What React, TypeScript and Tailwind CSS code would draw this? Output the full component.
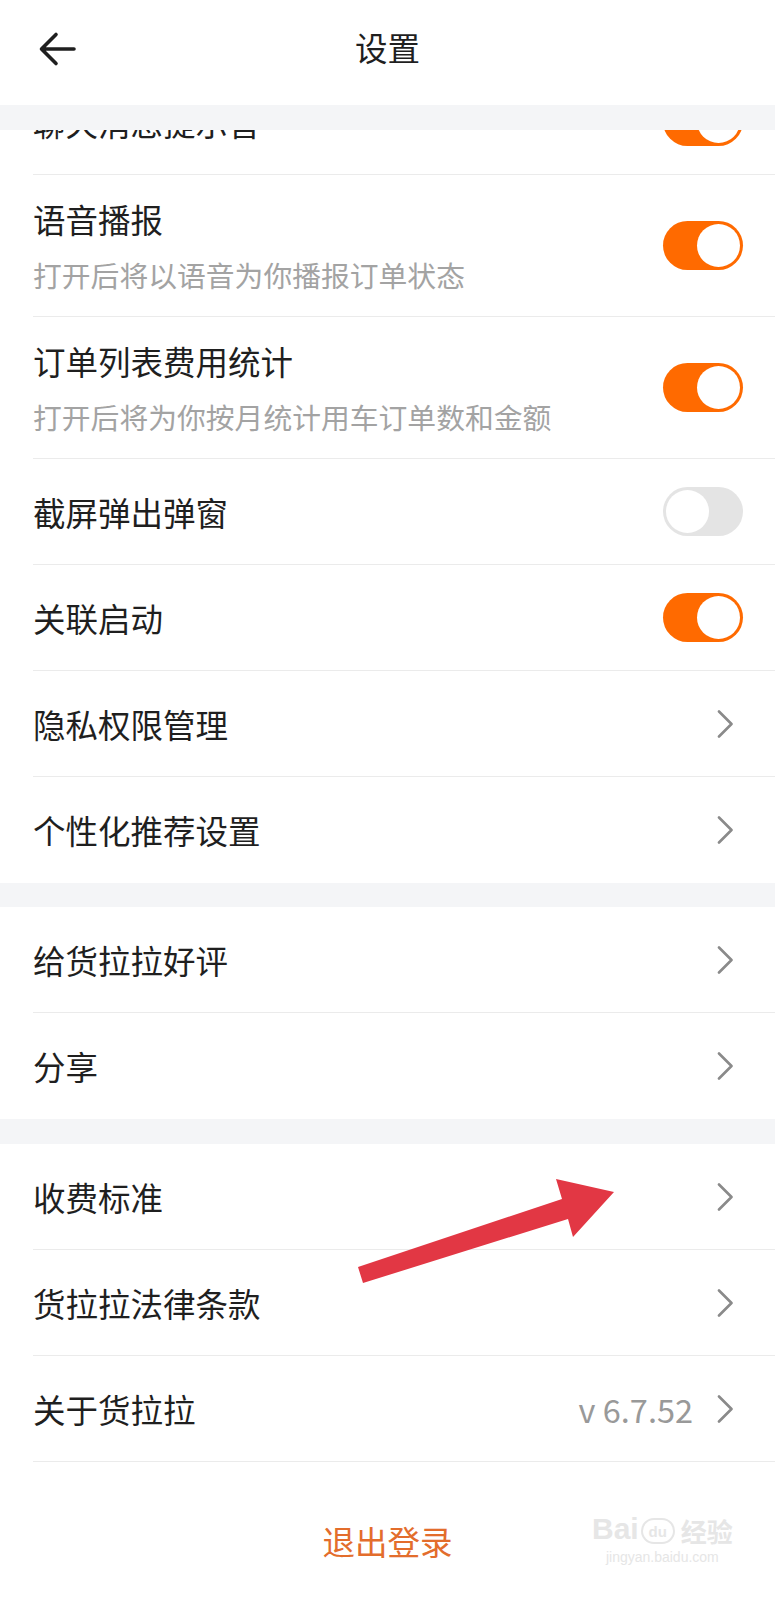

import type { ReactNode } from "react";

const FONT = '"Noto Sans CJK SC", "Noto Sans", sans-serif';

function Toggle({ on }: { on: boolean }) {
  return (
    <div
      className={
        on
          ? "w-[80px] h-[49px] rounded-full bg-[#ff6a00] p-[3px] flex justify-end"
          : "w-[80px] h-[49px] rounded-full bg-[#e4e4e4] p-[3px] flex justify-start"
      }
    >
      <div className="size-[43px] rounded-full bg-white" />
    </div>
  );
}

function Chevron() {
  return (
    <svg width="17" height="28" viewBox="0 0 17 28" className="shrink-0">
      <path d="M2 1.5 L14.5 14 L2 26.5" fill="none" stroke="#8a8a8a" strokeWidth="2.6" strokeLinecap="round" strokeLinejoin="round" />
    </svg>
  );
}

interface RowProps {
  title: string;
  subtitle?: string;
  right: ReactNode;
  divider?: boolean;
}

function Row({ title, subtitle, right, divider = true }: RowProps) {
  return (
    <div className="pl-[33px] bg-white">
      <div
        className={
          (divider ? "border-b border-[#ebebeb] " : "") +
          (subtitle ? "h-[142px] " : "h-[106px] ") +
          "flex items-center justify-between"
        }
      >
        <div className="flex flex-col">
          <span className="text-[32.5px] leading-[38px] text-[#1f1f1f]">{title}</span>
          {subtitle && (
            <span className="mt-[20px] text-[28.8px] leading-[34px] text-[#a3a3a3]">{subtitle}</span>
          )}
        </div>
        {right}
      </div>
    </div>
  );
}

function Link({ title, value, divider = true }: { title: string; value?: string; divider?: boolean }) {
  return (
    <Row
      title={title}
      divider={divider}
      right={
        <div className="flex items-center gap-[24px] pr-[41px]">
          {value && <span className="text-[32.5px] leading-[38px] text-[#999999]">{value}</span>}
          <Chevron />
        </div>
      }
    />
  );
}

function Switch({ title, subtitle, on, divider = true }: { title: string; subtitle?: string; on: boolean; divider?: boolean }) {
  return (
    <Row
      title={title}
      subtitle={subtitle}
      divider={divider}
      right={
        <div className="pr-[32px]">
          <Toggle on={on} />
        </div>
      }
    />
  );
}

export default function App() {
  return (
    <div className="relative w-full h-[1600px] overflow-hidden bg-white" style={{ fontFamily: FONT }}>
      {/* title bar */}
      <header className="h-[105px] pb-[12px] bg-white flex items-center relative">
        <button type="button" aria-label="返回" className="absolute left-[38px] top-[31px]">
          <svg width="40" height="36" viewBox="0 0 40 36">
            <path d="M36 18 H4 M18 3.5 L3.5 18 L18 32.5" fill="none" stroke="#1f1f1f" strokeWidth="3.6" strokeLinecap="round" strokeLinejoin="round" />
          </svg>
        </button>
        <h1 className="w-full text-center text-[32.5px] leading-[38px] text-[#1f1f1f] font-normal">设置</h1>
      </header>
      <div className="h-[25px] bg-[#f4f5f7]" />

      {/* list, scrolled a little */}
      <div className="h-[45px] overflow-hidden">
        <div className="-mt-[61px]">
          <Switch title="聊天消息提示音" on />
        </div>
      </div>
      <Switch title="语音播报" subtitle="打开后将以语音为你播报订单状态" on />
      <Switch title="订单列表费用统计" subtitle="打开后将为你按月统计用车订单数和金额" on />
      <Switch title="截屏弹出弹窗" on={false} />
      <Switch title="关联启动" on />
      <Link title="隐私权限管理" />
      <Link title="个性化推荐设置" divider={false} />

      <div className="h-[24px] bg-[#f4f5f7]" />
      <Link title="给货拉拉好评" />
      <Link title="分享" divider={false} />

      <div className="h-[25px] bg-[#f4f5f7]" />
      <Link title="收费标准" />
      <Link title="货拉拉法律条款" />
      <Link title="关于货拉拉" value="v 6.7.52" />

      <div className="flex justify-center pt-[60px]">
        <button type="button" className="text-[32.5px] leading-[38px] text-[#e36d2c]">退出登录</button>
      </div>

      {/* red annotation arrow */}
      <svg className="absolute left-0 top-0 pointer-events-none" width="775" height="1600" viewBox="0 0 775 1600">
        <polygon
          points="358,1267 562,1199 556,1179 614,1192 573,1237 568,1219 363,1283"
          fill="#e23744"
        />
      </svg>

      {/* watermark */}
      <div className="absolute left-[592px] top-[1514px] flex flex-col items-center text-[#e6e6e6] pointer-events-none select-none">
        <div className="flex items-end leading-none">
          <span className="text-[30px] font-bold" style={{ fontFamily: '"Liberation Sans", sans-serif' }}>Bai</span>
          <span className="relative mx-[2px] flex items-center justify-center rounded-full border-2 border-[#e6e6e6] w-[34px] h-[26px] text-[15px] font-bold" style={{ fontFamily: '"Liberation Sans", sans-serif' }}>
            du
          </span>
          <span className="ml-[4px] text-[26px] font-bold">经验</span>
        </div>
        <span className="mt-[6px] text-[14px] leading-none" style={{ fontFamily: '"Liberation Sans", sans-serif' }}>jingyan.baidu.com</span>
      </div>
    </div>
  );
}
